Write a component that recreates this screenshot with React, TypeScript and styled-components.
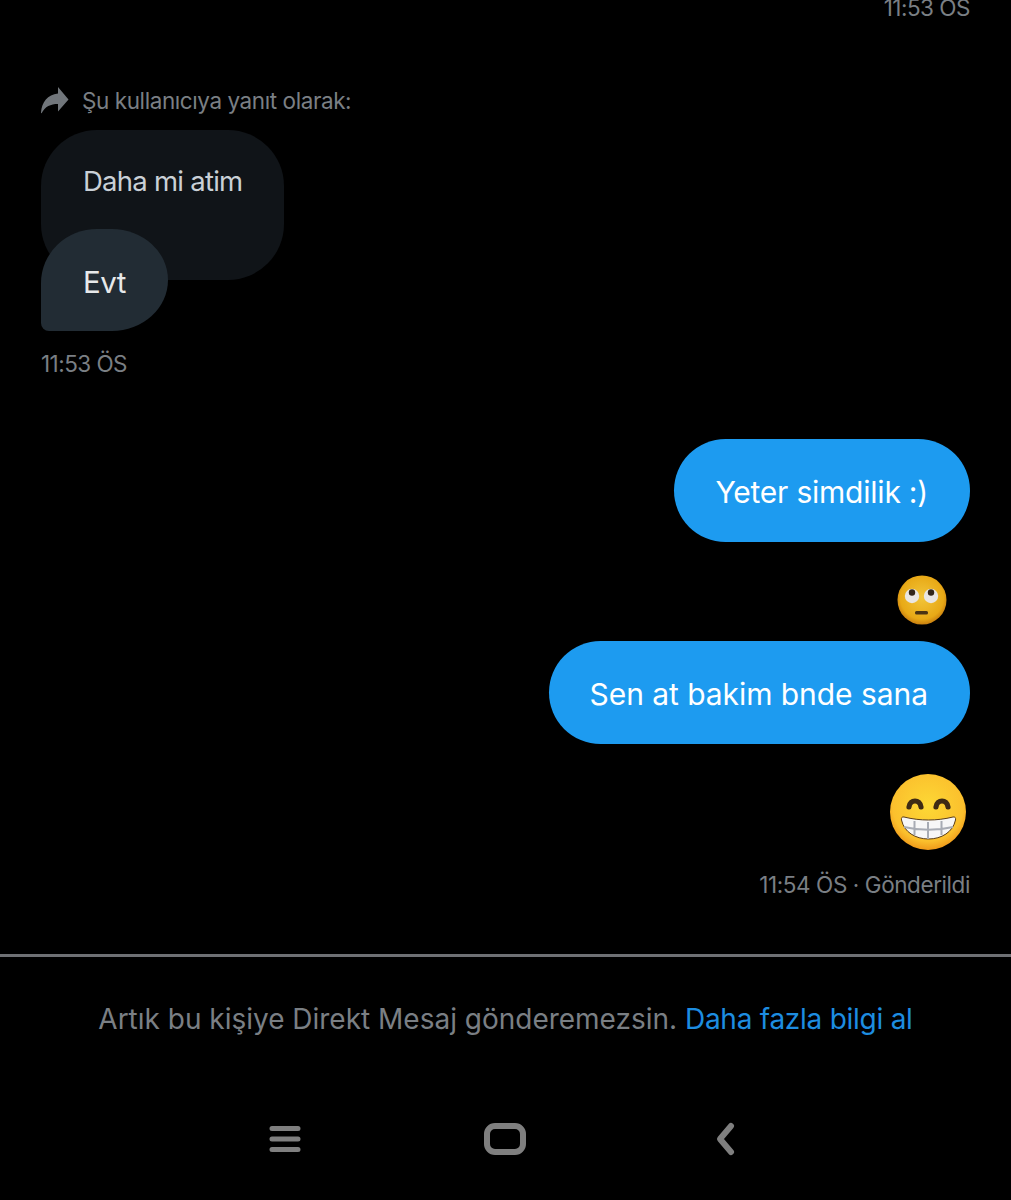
import styled, { createGlobalStyle } from "styled-components";

const GlobalStyle = createGlobalStyle`
  html, body {
    margin: 0;
    background: #000;
  }
`;

const Page = styled.div`
  width: 1011px;
  height: 1200px;
  overflow: hidden;
  background: #000;
  display: flex;
  flex-direction: column;
  font-family: Inter, "Liberation Sans", sans-serif;
`;

const Thread = styled.div`
  height: 954px;
  padding: 0 41px;
  box-sizing: border-box;
  display: flex;
  flex-direction: column;
`;

const Time = styled.div<{ $right?: boolean }>`
  font-size: 22.5px;
  line-height: 28px;
  letter-spacing: -0.55px;
  color: #7a7f84;
  text-align: ${(props) => (props.$right ? "right" : "left")};
`;

const TopTime = styled(Time)`
  margin-top: -6px;
  letter-spacing: -0.5px;
`;

const ReplyNote = styled.div`
  display: flex;
  align-items: center;
  gap: 13px;
  margin-top: 62px;
  height: 32px;
  font-size: 22.5px;
  letter-spacing: -0.42px;
  color: #7a7f84;
`;

const ReplyIcon = styled.svg`
  width: 28px;
  height: 28px;
  fill: #71767b;
  flex: none;
`;

const Received = styled.div`
  display: flex;
  flex-direction: column;
  align-items: flex-start;
  margin-top: 14px;
`;

const Quoted = styled.div`
  width: 243px;
  height: 150px;
  box-sizing: border-box;
  padding: 34px 0 0 42px;
  border-radius: 56px;
  background: #101418;
  color: #c9d0d6;
  font-size: 27.5px;
  line-height: 34px;
  letter-spacing: -0.75px;
`;

const Reply = styled.div`
  width: 127px;
  height: 102px;
  margin-top: -51px;
  box-sizing: border-box;
  padding: 36px 0 0 42px;
  border-radius: 56px 56px 56px 8px / 54px 51px 51px 8px;
  background: #222c34;
  color: #e7e9ea;
  font-size: 29.5px;
  line-height: 34px;
  letter-spacing: -0.5px;
`;

const ReceivedTime = styled(Time)`
  margin-top: 19px;
`;

const Sent = styled.div`
  display: flex;
  flex-direction: column;
  align-items: flex-end;
  margin-top: 61px;
`;

const Bubble = styled.div<{ $spacing: number }>`
  height: 103px;
  box-sizing: border-box;
  padding: 2px 42px 0 41px;
  display: flex;
  align-items: center;
  border-radius: 52px;
  background: #1d9bf0;
  color: #fff;
  font-size: 30px;
  letter-spacing: ${(props) => props.$spacing}px;
`;

const Emoji = styled.svg<{ $size: number; $top: number; $bottom: number; $shift: number }>`
  display: block;
  width: ${(props) => props.$size}px;
  height: ${(props) => props.$size}px;
  margin: ${(props) => props.$top}px ${(props) => props.$shift}px ${(props) => props.$bottom}px 0;
`;

const SentTime = styled(Time)`
  margin-top: 19px;
  letter-spacing: -0.42px;
`;

const Notice = styled.div`
  height: 246px;
  box-sizing: border-box;
  border-top: 3px solid #6e7074;
  padding-top: 45px;
  display: flex;
  flex-direction: column;
  align-items: center;
`;

const NoticeText = styled.div`
  font-size: 28px;
  line-height: 34px;
  letter-spacing: -0.01px;
  color: #7a7f84;
`;

const NoticeLink = styled.span`
  color: #1d8de0;
  letter-spacing: -0.26px;
`;

const NavBar = styled.div`
  margin-top: 83px;
  width: 488px;
  display: flex;
  justify-content: space-between;
  align-items: center;
`;

const NavIcon = styled.svg`
  width: 46px;
  height: 40px;
  fill: none;
  stroke: #7f7f7f;
  stroke-linecap: round;
  stroke-linejoin: round;
`;

function RollingEyes() {
  return (
    <Emoji viewBox="0 0 52 52" $size={52} $top={32} $bottom={15} $shift={22}>
      <defs>
        <radialGradient id="roll" cx="50%" cy="45%" r="55%">
          <stop offset="0%" stopColor="#f2c53a" />
          <stop offset="80%" stopColor="#e8a916" />
          <stop offset="100%" stopColor="#c97f10" />
        </radialGradient>
      </defs>
      <circle cx="26" cy="26" r="24.5" fill="url(#roll)" />
      <circle cx="16" cy="22" r="7.2" fill="#e9e6e3" />
      <circle cx="35" cy="22" r="7.2" fill="#e9e6e3" />
      <circle cx="16" cy="18.500" r="3.2" fill="#33261a" />
      <circle cx="35" cy="18.500" r="3.2" fill="#33261a" />
      <rect x="19" y="37" width="13" height="3.4" rx="1.5" fill="#4a3314" />
    </Emoji>
  );
}

function Grinning() {
  return (
    <Emoji viewBox="0 0 78 78" $size={78} $top={30} $bottom={0} $shift={3}>
      <defs>
        <radialGradient id="grin" cx="50%" cy="42%" r="58%">
          <stop offset="0%" stopColor="#fdd835" />
          <stop offset="80%" stopColor="#fbc02d" />
          <stop offset="100%" stopColor="#f09a1a" />
        </radialGradient>
      </defs>
      <circle cx="39" cy="38" r="38" fill="url(#grin)" />
      <path d="M20 33c1-8 11-8 12 0M47 33c1-8 11-8 12 0" fill="none" stroke="#3e2a14" strokeWidth="5.200" strokeLinecap="round" />
      <path d="M15 43c16 4 33 4 49 0 2-.5 3 1 2.500 3-2.500 12-14 19-27 19s-24.500-7-27-19c-.5-2 .5-3.500 2.500-3z" fill="#f7f7f7" stroke="#5a3d18" strokeWidth="1" />
      <path d="M25.500 47v14M39 48v17M52.500 47v14M15 53c15 3.500 34 3.500 49 0" fill="none" stroke="#a8acb4" strokeWidth="2" />
    </Emoji>
  );
}

export default function App() {
  return (
    <Page>
      <GlobalStyle />
      <Thread>
        <TopTime $right>11:53 ÖS</TopTime>
        <ReplyNote>
          <ReplyIcon viewBox="0 0 28 28">
            <path d="M17 1 27.500 13.500 17 25.500v-7.500C9.500 18 4 20.500.6 27.200.2 27.500 0 27 0 26.500 .8 16 6.500 8.500 17 7.500z" />
          </ReplyIcon>
          Şu kullanıcıya yanıt olarak:
        </ReplyNote>
        <Received>
          <Quoted>Daha mi atim</Quoted>
          <Reply>Evt</Reply>
        </Received>
        <ReceivedTime>11:53 ÖS</ReceivedTime>
        <Sent>
          <Bubble $spacing={-0.22}>Yeter simdilik :)</Bubble>
          <RollingEyes />
          <Bubble $spacing={-0.05}>Sen at bakim bnde sana</Bubble>
          <Grinning />
        </Sent>
        <SentTime $right>11:54 ÖS · Gönderildi</SentTime>
      </Thread>
      <Notice>
        <NoticeText>
          Artık bu kişiye Direkt Mesaj gönderemezsin. <NoticeLink>Daha fazla bilgi al</NoticeLink>
        </NoticeText>
        <NavBar>
          <NavIcon viewBox="0 0 46 40" strokeWidth="5">
            <path d="M10 9.500h26M10 20h26M10 30.500h26" />
          </NavIcon>
          <NavIcon viewBox="0 0 46 40" strokeWidth="6">
            <rect x="4" y="7" width="36" height="26" rx="8" />
          </NavIcon>
          <NavIcon viewBox="0 0 46 40" strokeWidth="6">
            <path d="M27 7 16 20l11 13" />
          </NavIcon>
        </NavBar>
      </Notice>
    </Page>
  );
}
